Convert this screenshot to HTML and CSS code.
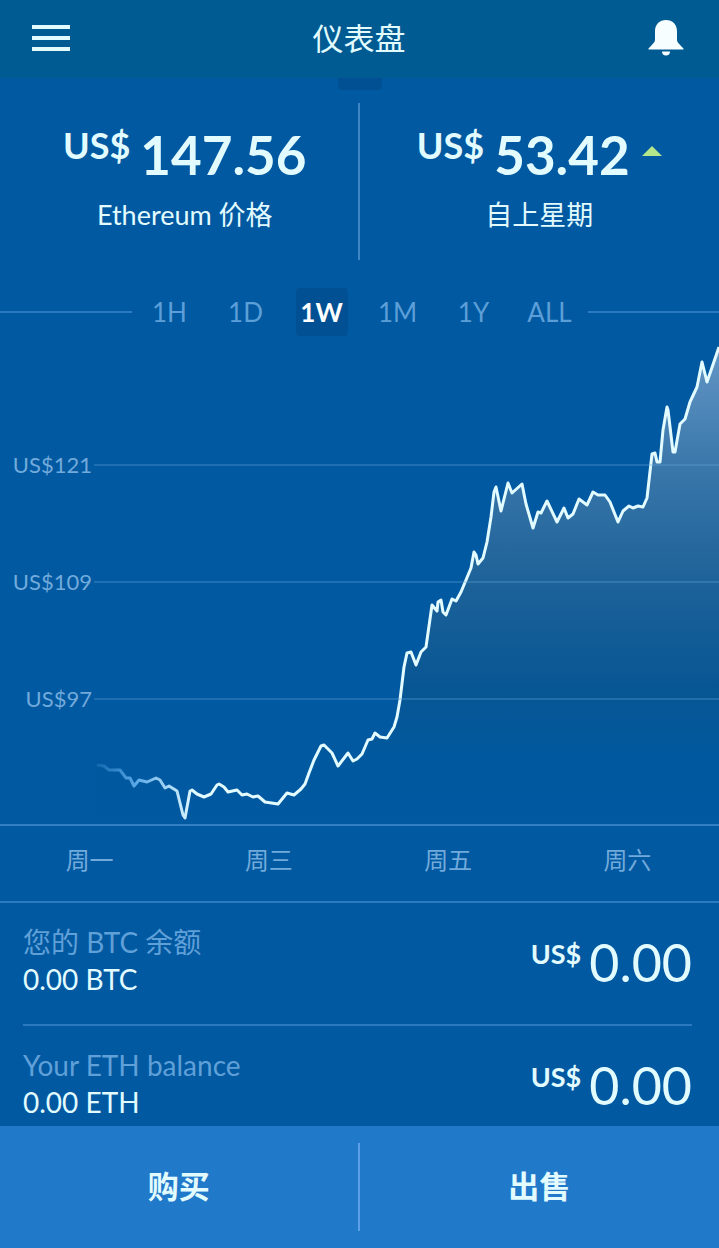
FILE: index.html
```html
<!DOCTYPE html>
<html lang="zh-CN">
<head>
    <meta charset="UTF-8">
    <meta name="viewport" content="width=device-width, initial-scale=1">
    <title>仪表盘</title>
    <link rel="stylesheet" href="styles.css">
</head>
<body>

    <header class="topbar">
        <button class="icon-button" type="button" aria-label="菜单">
            <svg width="38" height="38" viewBox="0 0 38 38">
                <path d="M0 8h38M0 19h38M0 30h38" stroke="currentColor" stroke-width="4"/>
            </svg>
        </button>
        <h1>仪表盘</h1>
        <button class="icon-button" type="button" aria-label="通知">
            <svg width="36" height="38" viewBox="0 0 36 38" fill="#f6feff">
                <path d="M18 1C11.500 1 7 5.500 7 12V20.500C7 23 5.500 24.500 .5 29.500V30.500H35.500V29.500C30.500 24.500 29 23 29 20.500V12C29 5.500 24.500 1 18 1Z"/>
                <path d="M14 32.500H22C22 35 20.500 36.500 18 36.500S14 35 14 32.500Z"/>
            </svg>
        </button>
    </header>

    <main>
        <div class="handle"></div>

        <section class="stats">
            <div class="stat">
                <div class="price"><span class="currency">US$</span><span>147.56</span></div>
                <div class="stat-label">Ethereum 价格</div>
            </div>
            <div class="stat">
                <div class="price"><span class="currency">US$</span><span>53.42</span><i class="up"></i></div>
                <div class="stat-label">自上星期</div>
            </div>
        </section>

        <nav class="ranges">
            <button type="button">1H</button>
            <button type="button">1D</button>
            <button type="button" class="active">1W</button>
            <button type="button">1M</button>
            <button type="button">1Y</button>
            <button type="button">ALL</button>
        </nav>

        <section class="chart">
            <svg class="plot" viewBox="0 0 719 484" preserveAspectRatio="none">
                <defs>
                    <linearGradient id="areaFill" gradientUnits="userSpaceOnUse" x1="0" y1="0" x2="0" y2="484">
                        <stop offset="0" stop-color="#6599c8"/>
                        <stop offset=".26" stop-color="#3a77aa"/>
                        <stop offset=".5" stop-color="#1d6299"/>
                        <stop offset=".72" stop-color="#075694"/>
                        <stop offset=".87" stop-color="#00599e"/>
                        <stop offset="1" stop-color="#0059a1"/>
                    </linearGradient>
                    <linearGradient id="lineFade" gradientUnits="userSpaceOnUse" x1="95" y1="0" x2="195" y2="0">
                        <stop offset="0" stop-color="#4a9be0" stop-opacity=".2"/>
                        <stop offset=".4" stop-color="#5ba8e6"/>
                        <stop offset="1" stop-color="#e2fbff"/>
                    </linearGradient>
                    <path id="priceLine" d="M97 425L104 426L109 430L120 430L126 438L130 438L134 446L139 440L147 442L156 438L160 440L165 448L169 446L177 451L183 475L185 478L190 451L192 450L197 454L204 457L211 454L217 445L219 444L224 447L228 452L237 450L242 455L247 454L253 457L258 456L265 462L278 464L287 453L294 455L301 449L305 444L309 433L314 420L321 406L324 405L332 413L338 426L348 413L353 421L357 419L362 414L368 400L372 399L375 393L380 397L387 398L394 387L397 377L400 360L404 327L407 313L411 312L416 325L421 312L426 307L428 293L432 265L437 271L438 262L441 260L443 272L446 275L452 259L456 261L461 252L466 240L471 228L474 212L476 215L478 224L483 218L487 202L491 177L494 152L496 147L501 171L508 143L512 153L522 144L526 164L533 188L538 172L541 173L547 161L557 182L564 168L568 178L573 174L579 159L587 165L593 152L598 155L605 155L610 162L618 182L623 171L629 166L633 168L638 166L643 167L647 158L652 114L655 113L657 122L660 122L663 90L667 67L668 70L673 112L675 112L680 84L685 79L690 62L697 47L702 22L707 42L719 7"/>
                </defs>
                <path d="M97 425L104 426L109 430L120 430L126 438L130 438L134 446L139 440L147 442L156 438L160 440L165 448L169 446L177 451L183 475L185 478L190 451L192 450L197 454L204 457L211 454L217 445L219 444L224 447L228 452L237 450L242 455L247 454L253 457L258 456L265 462L278 464L287 453L294 455L301 449L305 444L309 433L314 420L321 406L324 405L332 413L338 426L348 413L353 421L357 419L362 414L368 400L372 399L375 393L380 397L387 398L394 387L397 377L400 360L404 327L407 313L411 312L416 325L421 312L426 307L428 293L432 265L437 271L438 262L441 260L443 272L446 275L452 259L456 261L461 252L466 240L471 228L474 212L476 215L478 224L483 218L487 202L491 177L494 152L496 147L501 171L508 143L512 153L522 144L526 164L533 188L538 172L541 173L547 161L557 182L564 168L568 178L573 174L579 159L587 165L593 152L598 155L605 155L610 162L618 182L623 171L629 166L633 168L638 166L643 167L647 158L652 114L655 113L657 122L660 122L663 90L667 67L668 70L673 112L675 112L680 84L685 79L690 62L697 47L702 22L707 42L719 7V484H97Z" fill="url(#areaFill)"/>
                <use href="#priceLine" fill="none" stroke="url(#lineFade)" stroke-width="3" stroke-linejoin="round"/>
            </svg>
            <div class="scale">
                <div class="tick"><span>US$121</span></div>
                <div class="tick"><span>US$109</span></div>
                <div class="tick"><span>US$97</span></div>
            </div>
        </section>

        <div class="days">
            <span>周一</span>
            <span>周三</span>
            <span>周五</span>
            <span>周六</span>
        </div>

        <section class="balances">
            <div class="balance">
                <div>
                    <div class="name">您的 BTC 余额</div>
                    <div>0.00 BTC</div>
                </div>
                <div class="amount"><span class="currency">US$</span><span>0.00</span></div>
            </div>
            <div class="balance">
                <div>
                    <div class="name">Your ETH balance</div>
                    <div>0.00 ETH</div>
                </div>
                <div class="amount"><span class="currency">US$</span><span>0.00</span></div>
            </div>
        </section>
    </main>

    <footer class="actions">
        <button type="button">购买</button>
        <button type="button">出售</button>
    </footer>

</body>
</html>
```
FILE: styles.css
```css
* {
    box-sizing: border-box;
}

body {
    margin: 0;
    min-height: 100vh;
    display: flex;
    flex-direction: column;
    background-color: #0059a1;
    color: #e2fbff;
    font-family: Lato, "Noto Sans CJK SC", sans-serif;
    font-size: 26px;
}

button {
    padding: 0;
    border: none;
    background: none;
    color: inherit;
    font: inherit;
    cursor: pointer;
}

main {
    flex: 1;
}

.topbar {
    display: flex;
    align-items: center;
    justify-content: space-between;
    height: 78px;
    padding: 0 35px 2px 32px;
    background-color: #005b93;
}

.topbar h1 {
    margin: 0;
    font-size: 31px;
    font-weight: 400;
    line-height: 42px;
}

.icon-button {
    display: flex;
}

.handle {
    width: 44px;
    height: 12px;
    margin: 0 auto;
    border-radius: 0 0 4px 4px;
    background-color: #005093;
}

.stats {
    display: grid;
    grid-template-columns: 1fr 1fr;
    margin-top: 13px;
}

.stat {
    height: 157px;
    padding-top: 20px;
    text-align: center;
}

.stat:first-child {
    padding-left: 12px;
    border-right: 2px solid #3f86c4;
}

.price {
    display: flex;
    justify-content: center;
    gap: 10px;
    font-size: 53px;
    font-weight: 700;
    line-height: 64px;
}

.price .currency {
    font-size: 36px;
    line-height: 44px;
}

.up {
    align-self: center;
    margin: 0 0 8px 2px;
    border: 10px solid transparent;
    border-top: none;
    border-bottom-color: #b4e68c;
}

.stat-label {
    font-size: 27px;
    line-height: 56px;
}

.ranges {
    display: flex;
    align-items: center;
    gap: 24px;
    margin-top: 28px;
    padding-right: 4px;
    color: #5c9fd8;
}

.ranges::before,
.ranges::after {
    content: "";
    flex: 1;
    height: 2px;
    background-color: #2b7abf;
}

.ranges::before {
    margin-right: -12px;
}

.ranges::after {
    margin: 0 -4px 0 -12px;
}

.ranges button {
    width: 52px;
    height: 48px;
    border-radius: 4px;
}

.ranges .active {
    background-color: #005093;
    color: #fff;
    font-weight: 700;
}

.chart {
    display: grid;
    height: 486px;
    margin-top: 4px;
    border-bottom: 2px solid #3280c3;
}

.plot,
.scale {
    grid-area: 1 / 1;
    width: 100%;
    height: 484px;
}

.scale {
    padding-top: 66px;
}

.tick {
    display: flex;
    align-items: center;
    height: 117px;
    color: #72aadb;
    font-size: 22px;
}

.tick span {
    width: 92px;
    text-align: right;
}

.tick::after {
    content: "";
    flex: 1;
    height: 2px;
    margin-left: 2px;
    background-color: rgba(100, 165, 220, 0.3);
}

.days {
    display: grid;
    grid-template-columns: repeat(4, 1fr);
    height: 77px;
    padding-right: 2px;
    border-bottom: 2px solid #2b7abf;
    color: #72aadb;
    font-size: 24px;
    line-height: 68px;
    text-align: center;
}

.balances {
    padding: 0 27px 0 23px;
}

.balance {
    display: flex;
    justify-content: space-between;
    padding: 21px 0 26px;
    border-bottom: 2px solid #2b7abf;
    font-size: 28px;
    line-height: 37px;
}

.balance:last-child {
    padding-bottom: 4px;
    border-bottom: none;
}

.name {
    color: #60a0d8;
}

.amount {
    display: flex;
    gap: 8px;
    font-size: 52px;
    line-height: 76px;
    height: 74px;
}

.amount .currency {
    font-size: 27px;
    font-weight: 700;
    line-height: 60px;
}

.actions {
    position: sticky;
    bottom: 0;
    display: grid;
    grid-template-columns: 1fr 1fr;
    height: 122px;
    padding: 17px 0;
    background-color: #2079c9;
}

.actions button {
    padding-bottom: 6px;
    font-size: 31px;
    font-weight: 700;
}

.actions button:first-child {
    border-right: 2px solid #5a9fe8;
}
```
